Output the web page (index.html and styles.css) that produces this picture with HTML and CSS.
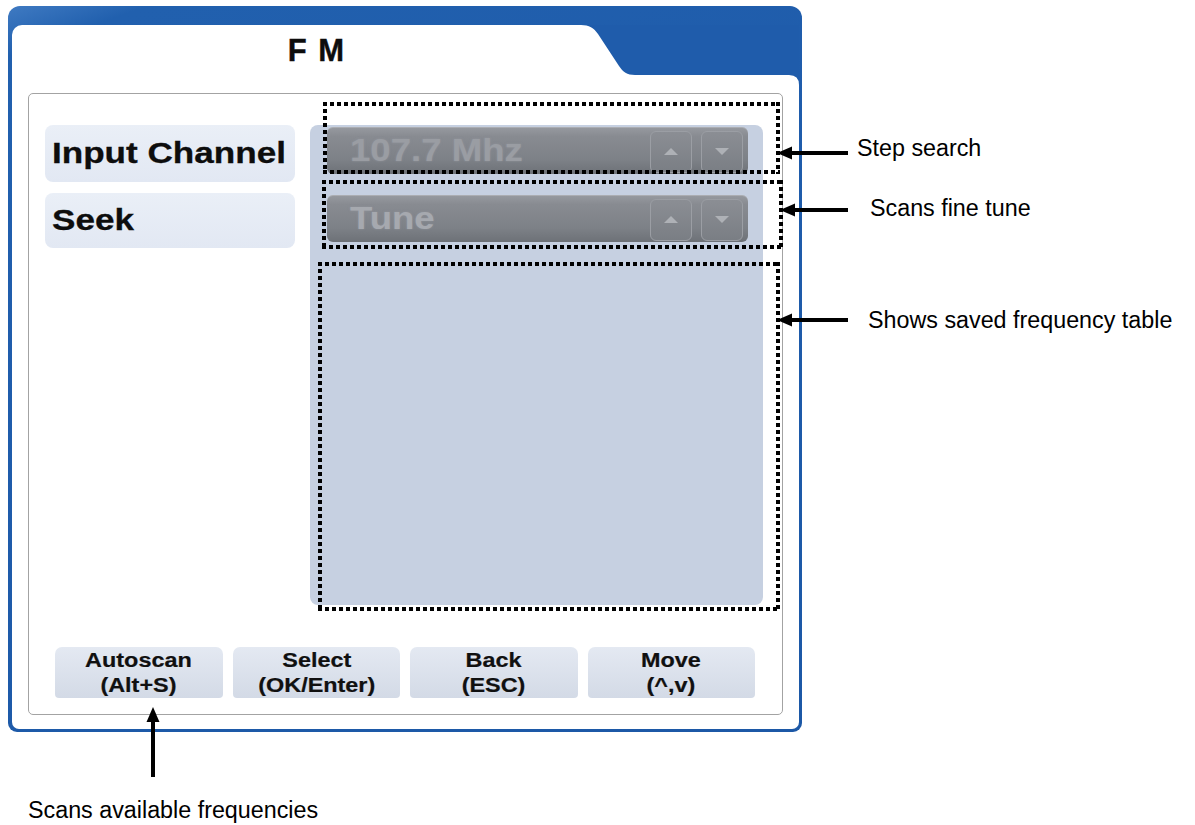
FILE: index.html
```html
<!DOCTYPE html>
<html lang="en">
<head>
    <meta charset="UTF-8">
    <title>FM Tuner</title>
    <meta name="viewport" content="width=device-width, initial-scale=1.0">
    <link rel="stylesheet" href="styles.css">
</head>
<body>

<div class="stage">

    <div class="device">
        <div class="screen">
            <svg class="notch" viewBox="0 0 220 60" width="220" height="60">
                <path d="M0,0 L2,0 C10,0 15,3 19,9 L40,41 C44,47 48,50 56,50 L210,50 Q220,50 220,60 L220,0 Z" fill="#1f5cab"/>
            </svg>

            <header class="tab-title">
                <h1>F M</h1>
            </header>

            <div class="panel">
                <div class="main">
                    <div class="labels">
                        <div class="label label-tall"><span>Input Channel</span></div>
                        <div class="label"><span>Seek</span></div>
                    </div>

                    <div class="values">
                        <div class="spinner">
                            <span class="spin-text">107.7 Mhz</span>
                            <div class="spin-btns">
                                <button class="spin-btn"><i class="tri-up"></i></button>
                                <button class="spin-btn"><i class="tri-down"></i></button>
                            </div>
                        </div>
                        <div class="spinner">
                            <span class="spin-text spin-text-light">Tune</span>
                            <div class="spin-btns">
                                <button class="spin-btn"><i class="tri-up"></i></button>
                                <button class="spin-btn"><i class="tri-down"></i></button>
                            </div>
                        </div>
                    </div>
                </div>

                <div class="softkeys">
                    <button class="softkey"><span>Autoscan<br>(Alt+S)</span></button>
                    <button class="softkey"><span>Select<br>(OK/Enter)</span></button>
                    <button class="softkey"><span>Back<br>(ESC)</span></button>
                    <button class="softkey"><span>Move<br>(^,v)</span></button>
                </div>
            </div>
        </div>
    </div>

    <!-- annotation layer -->
    <div class="dots dots-step"></div>
    <div class="dots dots-tune"></div>
    <div class="dots dots-table"></div>

    <svg class="arrows" width="1195" height="825" viewBox="0 0 1195 825">
        <g fill="#000">
            <polygon points="777,153 792,146.5 792,159.5"/>
            <rect x="790" y="151" width="58" height="4"/>
            <polygon points="780,210 795,203.5 795,216.5"/>
            <rect x="793" y="208" width="55" height="4"/>
            <polygon points="777,320 792,313.5 792,326.5"/>
            <rect x="790" y="318" width="58" height="4"/>
            <polygon points="153,707 146.5,722 159.5,722"/>
            <rect x="151" y="720" width="4" height="57"/>
        </g>
    </svg>

    <p class="note note-step">Step search</p>
    <p class="note note-tune">Scans fine tune</p>
    <p class="note note-table">Shows saved frequency table</p>
    <p class="note note-scan">Scans available frequencies</p>

</div>

</body>
</html>
```

FILE: styles.css
```css
body {
    margin: 0;
    background-color: #ffffff;
    font-family: "Liberation Sans", Arial, sans-serif;
}
.stage {
    position: relative;
    width: 1195px;
    height: 825px;
    padding: 6px 0 0 8px;
    box-sizing: border-box;
}

/* blue outer frame */
.device {
    width: 794px;
    height: 726px;
    box-sizing: border-box;
    padding: 19px 3px 3px 4px;
    border-radius: 12px 12px 9px 9px;
    background: linear-gradient(160deg, #3f7ac2 0%, #2160ae 5%, #1f5cab 40%, #1c58a6 100%);
}
.screen {
    position: relative;
    height: 100%;
    background-color: #ffffff;
    border-radius: 10px 0 7px 7px;
    overflow: hidden;
}
.notch {
    position: absolute;
    top: 0;
    right: 0;
}
.tab-title {
    width: 608px;
    height: 68px;
    text-align: center;
}
.tab-title h1 {
    margin: 0;
    padding-top: 10px;
    font-size: 31px;
    line-height: 1;
    font-weight: bold;
    color: #0d0d0d;
    word-spacing: 3px;
    -webkit-text-stroke: 0.4px #0d0d0d;
}

/* inner panel */
.panel {
    height: 622px;
    box-sizing: border-box;
    margin: 0 16px 0 16px;
    padding: 31px 0 0 16px;
    border: 1px solid #a3a3a3;
    border-radius: 5px;
}
.main {
    display: flex;
    gap: 15px;
    height: 480px;
}
.labels {
    width: 250px;
    display: flex;
    flex-direction: column;
    gap: 11px;
}
.label {
    height: 55px;
    display: flex;
    align-items: center;
    padding-left: 7px;
    border-radius: 8px;
    background: linear-gradient(#eaeff7, #e2e8f3);
}
.label-tall {
    height: 57px;
}
.label span {
    display: inline-block;
    font-size: 29px;
    font-weight: bold;
    color: #0d0d0d;
    transform: scaleX(1.21);
    transform-origin: left center;
    -webkit-text-stroke: 0.3px #0d0d0d;
}
.values {
    width: 453px;
    box-sizing: border-box;
    padding: 2px 15px 0 17px;
    display: flex;
    flex-direction: column;
    gap: 21px;
    border-radius: 8px;
    background-color: #c6d0e1;
}
.spinner {
    height: 47px;
    display: flex;
    align-items: center;
    justify-content: space-between;
    padding-left: 23px;
    border-radius: 6px;
    background: linear-gradient(#979aa0 0%, #888b91 20%, #7d8187 70%, #6d7177 100%);
    box-shadow: inset 0 1px 0 rgba(255,255,255,0.2);
}
.spin-text {
    display: inline-block;
    font-size: 31px;
    font-weight: bold;
    color: #9a9da3;
    transform: scaleX(1.18);
    transform-origin: left center;
    text-shadow: 0 0 2px rgba(150,153,160,0.8);
}
.spin-text-light {
    color: #a6a9af;
}
.spin-btns {
    display: flex;
    gap: 9px;
    margin-right: 5px;
    padding-top: 2px;
}
.spin-btn {
    width: 42px;
    height: 42px;
    padding: 0;
    display: flex;
    align-items: center;
    justify-content: center;
    border: 1px solid #9b9ea4;
    border-radius: 6px;
    background: linear-gradient(#8b8e94, #7a7e84);
}
.tri-up {
    width: 0;
    height: 0;
    border-left: 7px solid transparent;
    border-right: 7px solid transparent;
    border-bottom: 7px solid #aeb1b6;
}
.tri-down {
    width: 0;
    height: 0;
    border-left: 7px solid transparent;
    border-right: 7px solid transparent;
    border-top: 7px solid #aeb1b6;
}

/* bottom soft keys */
.softkeys {
    margin-top: 42px;
    margin-right: 27px;
    margin-left: 10px;
    display: grid;
    grid-template-columns: repeat(4, 1fr);
    gap: 10px;
}
.softkey {
    height: 51px;
    padding: 0;
    border: none;
    border-radius: 7px 7px 4px 4px;
    background: linear-gradient(#e4e9f2, #d3dae6);
    font-family: "Liberation Sans", Arial, sans-serif;
    font-size: 19.5px;
    line-height: 25px;
    font-weight: bold;
    color: #101010;
}
.softkey span {
    display: inline-block;
    transform: scaleX(1.2);
    -webkit-text-stroke: 0.2px #101010;
}

/* annotations */
.dots {
    position: absolute;
    background:
        repeating-linear-gradient(90deg, #000 0 4px, transparent 4px 7px) top left / 100% 4px no-repeat,
        repeating-linear-gradient(90deg, #000 0 4px, transparent 4px 7px) bottom left / 100% 4px no-repeat,
        repeating-linear-gradient(180deg, #000 0 4px, transparent 4px 7px) top left / 4px 100% no-repeat,
        repeating-linear-gradient(180deg, #000 0 4px, transparent 4px 7px) top right / 4px 100% no-repeat;
}
.dots-step {
    left: 323px;
    top: 102px;
    width: 457px;
    height: 72px;
}
.dots-tune {
    left: 322px;
    top: 180px;
    width: 461px;
    height: 69px;
}
.dots-table {
    left: 318px;
    top: 262px;
    width: 462px;
    height: 349px;
}
.arrows {
    position: absolute;
    left: 0;
    top: 0;
}
.note {
    position: absolute;
    margin: 0;
    font-size: 23.3px;
    line-height: 1;
    color: #000;
    white-space: nowrap;
}
.note-step {
    left: 857px;
    top: 137px;
}
.note-tune {
    left: 870px;
    top: 197px;
}
.note-table {
    left: 868px;
    top: 309px;
}
.note-scan {
    left: 28px;
    top: 799px;
}
```
